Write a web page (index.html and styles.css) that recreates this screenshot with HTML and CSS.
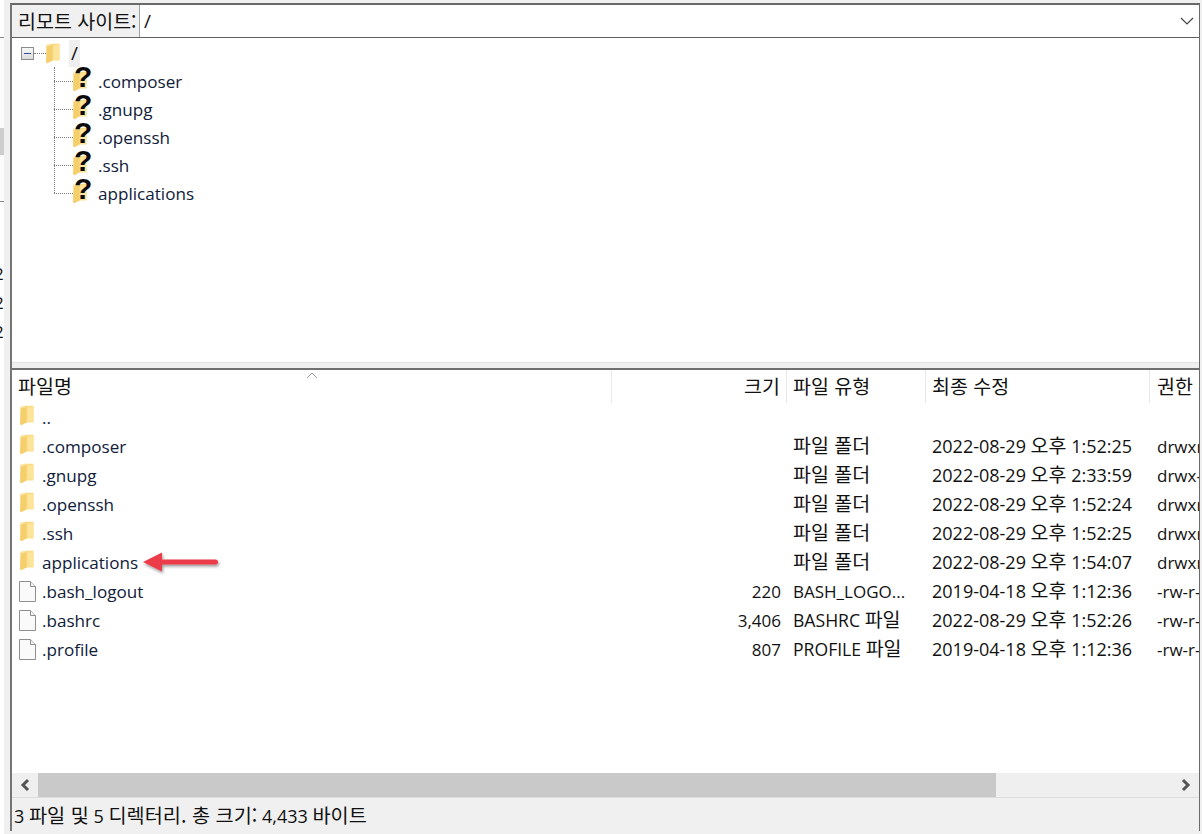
FILE: index.html
```html
<!DOCTYPE html>
<html lang="ko">
<head>
<meta charset="utf-8">
<title>리모트 사이트</title>
<link rel="stylesheet" href="styles.css">
</head>
<body>
<svg class="defs" width="0" height="0" aria-hidden="true">
  <symbol id="folder" viewBox="0 0 15 21">
    <path d="M5 0H14.5V18H5Z" fill="#fbdc86"/>
    <path d="M0 1.5 7 0V18L1.5 21 0 20Z" fill="#f6cf6d"/>
    <path d="M0 1.5 6.5 0.2V1.5L1 3V20Z" fill="#fbe6a8"/>
    <path d="M8 2H14.5V17H8Z" fill="#fde49b"/>
  </symbol>
  <symbol id="file" viewBox="0 0 17 21">
    <path d="M.5.5H11.5L16.5 5.5V20.5H.5Z" fill="#fafafa" stroke="#8f8f8f"/>
    <path d="M11.5.5V5.5H16.5" fill="#f2f2f2" stroke="#8f8f8f"/>
  </symbol>
</svg>
<div class="app">
  <aside class="strip">
    <div class="strip-top"></div>
    <div class="strip-mid"><div class="strip-thumb"></div></div>
    <div class="strip-low"><span>2</span><span>2</span><span>2</span></div>
  </aside>
  <main class="main">
    <div class="topbar">
      <div class="site-label ko">리모트 사이트:</div>
      <div class="site-input"><span class="path">/</span>
        <svg class="chevron" width="14" height="8" viewBox="0 0 14 8"><path d="M1 1 7 7 13 1" fill="none" stroke="#444" stroke-width="1.2"/></svg>
      </div>
    </div>
    <section class="tree">
      <div class="tree-root">
        <span class="expander"></span>
        <span class="hdots"></span>
        <svg class="icon-folder"><use href="#folder"/></svg>
        <span class="root-name">/</span>
      </div>
      <ul class="tree-children">
        <li><span class="qicon"><svg class="icon-folder"><use href="#folder"/></svg><b>?</b></span>.composer</li>
        <li><span class="qicon"><svg class="icon-folder"><use href="#folder"/></svg><b>?</b></span>.gnupg</li>
        <li><span class="qicon"><svg class="icon-folder"><use href="#folder"/></svg><b>?</b></span>.openssh</li>
        <li><span class="qicon"><svg class="icon-folder"><use href="#folder"/></svg><b>?</b></span>.ssh</li>
        <li><span class="qicon"><svg class="icon-folder"><use href="#folder"/></svg><b>?</b></span>applications</li>
      </ul>
    </section>
    <div class="splitter"></div>
    <section class="list">
      <div class="row head">
        <div class="c-name ko">파일명<svg class="sort" width="12" height="7" viewBox="0 0 12 7"><path d="M1 6 6 1 11 6" fill="none" stroke="#9a9a9a"/></svg></div>
        <div class="c-size ko">크기</div>
        <div class="c-type ko">파일 유형</div>
        <div class="c-date ko">최종 수정</div>
        <div class="c-perm ko">권한</div>
      </div>
      <div class="row"><div class="c-name"><svg class="icon-folder"><use href="#folder"/></svg>..</div></div>
      <div class="row"><div class="c-name"><svg class="icon-folder"><use href="#folder"/></svg>.composer</div><div class="c-size"></div><div class="c-type ko">파일 폴더</div><div class="c-date">2022-08-29 <span class="ko">오후</span> 1:52:25</div><div class="c-perm">drwxr-xr-x</div></div>
      <div class="row"><div class="c-name"><svg class="icon-folder"><use href="#folder"/></svg>.gnupg</div><div class="c-size"></div><div class="c-type ko">파일 폴더</div><div class="c-date">2022-08-29 <span class="ko">오후</span> 2:33:59</div><div class="c-perm">drwx------</div></div>
      <div class="row"><div class="c-name"><svg class="icon-folder"><use href="#folder"/></svg>.openssh</div><div class="c-size"></div><div class="c-type ko">파일 폴더</div><div class="c-date">2022-08-29 <span class="ko">오후</span> 1:52:24</div><div class="c-perm">drwxr-xr-x</div></div>
      <div class="row"><div class="c-name"><svg class="icon-folder"><use href="#folder"/></svg>.ssh</div><div class="c-size"></div><div class="c-type ko">파일 폴더</div><div class="c-date">2022-08-29 <span class="ko">오후</span> 1:52:25</div><div class="c-perm">drwxr-xr-x</div></div>
      <div class="row"><div class="c-name"><svg class="icon-folder"><use href="#folder"/></svg>applications
        <svg class="arrow" width="84" height="28" viewBox="0 0 84 28"><defs><filter id="shadow" x="-10%" y="-30%" width="125%" height="180%"><feDropShadow dx="1" dy="2" stdDeviation="1.5" flood-color="#000" flood-opacity=".4"/></filter></defs><path d="M0 11 19 1.5V8.5H72.5a2.5 2.5 0 0 1 0 5H19V20.5Z" fill="#ec3a48" filter="url(#shadow)"/></svg>
      </div><div class="c-size"></div><div class="c-type ko">파일 폴더</div><div class="c-date">2022-08-29 <span class="ko">오후</span> 1:54:07</div><div class="c-perm">drwxr-xr-x</div></div>
      <div class="row"><div class="c-name"><svg class="icon-file"><use href="#file"/></svg>.bash_logout</div><div class="c-size">220</div><div class="c-type">BASH_LOGO...</div><div class="c-date">2019-04-18 <span class="ko">오후</span> 1:12:36</div><div class="c-perm">-rw-r--r--</div></div>
      <div class="row"><div class="c-name"><svg class="icon-file"><use href="#file"/></svg>.bashrc</div><div class="c-size">3,406</div><div class="c-type wide">BASHRC <span class="ko">파일</span></div><div class="c-date">2022-08-29 <span class="ko">오후</span> 1:52:26</div><div class="c-perm">-rw-r--r--</div></div>
      <div class="row"><div class="c-name"><svg class="icon-file"><use href="#file"/></svg>.profile</div><div class="c-size">807</div><div class="c-type wide">PROFILE <span class="ko">파일</span></div><div class="c-date">2019-04-18 <span class="ko">오후</span> 1:12:36</div><div class="c-perm">-rw-r--r--</div></div>
    </section>
    <div class="hscroll">
      <button class="sb-btn" type="button"><svg width="12" height="14" viewBox="0 0 12 14"><path d="M9 2 4 7 9 12" fill="none" stroke="#555" stroke-width="3"/></svg></button>
      <div class="sb-track"><div class="sb-thumb"></div></div>
      <button class="sb-btn" type="button"><svg width="12" height="14" viewBox="0 0 12 14"><path d="M3 2 8 7 3 12" fill="none" stroke="#555" stroke-width="3"/></svg></button>
    </div>
    <footer class="status">3 <span class="ko">파일 및</span> 5 <span class="ko">디렉터리. 총 크기:</span> 4,433 <span class="ko">바이트</span></footer>
  </main>
</div>
</body>
</html>
```
FILE: styles.css
```css
* { box-sizing: border-box; }
html, body { margin: 0; padding: 0; }
body {
  width: 1202px;
  height: 834px;
  overflow: hidden;
  background: #f0f0f0;
  color: #111;
  font-family: "Open Sans", "Noto Sans CJK KR", sans-serif;
  font-size: 17px;
}
.ko { font-family: "Noto Sans CJK KR", sans-serif; font-size: 19.5px; }
span.ko { line-height: 1; }
.defs { position: absolute; }
.app { display: flex; height: 834px; }

.strip { width: 10px; display: flex; flex-direction: column; background: #f0f0f0; flex: none; }
.strip-top { height: 38px; width: 4px; background: #fff; border-bottom: 1px solid #8a8a8a; }
.strip-mid { height: 164px; width: 4px; padding-top: 90px; background: #fbfbfb; border-bottom: 1px solid #8a8a8a; }
.strip-thumb { height: 27px; background: #cdcdcd; }
.strip-low {
  flex: 1;
  width: 4px;
  background: #fff;
  overflow: hidden;
  padding-top: 60px;
  display: flex;
  flex-direction: column;
  gap: 5px;
}
.strip-low span { margin-left: -6px; height: 24px; line-height: 24px; font-size: 17px; }

.main {
  width: 1190px;
  display: flex;
  flex-direction: column;
  margin-top: 3px;
  margin-bottom: 3px;
  border-top: 2px solid #696969;
  border-left: 2px solid #757575;
  border-right: 1px solid #6a6a6a;
  flex: none;
  height: 828px;
}

.topbar { height: 33px; display: flex; border-bottom: 1px solid #606060; flex: none; }
.site-label {
  width: 128px;
  padding-left: 6px;
  background: #f0f0f0;
  line-height: 31px;
  white-space: nowrap;
  border-right: 1px solid #a0a0a0;
}
.site-input {
  flex: 1;
  background: #fff;
  padding-left: 4px;
  line-height: 32px;
  display: flex;
  align-items: center;
  justify-content: space-between;
  padding-right: 5px;
}
.path { font-size: 19px; }
.chevron { flex: none; }

.tree { height: 324px; background: #fff; flex: none; padding-left: 9px; padding-top: 1px; }
.tree-root { height: 28px; display: flex; align-items: center; }
.expander {
  width: 13px;
  height: 13px;
  border: 1px solid #8d8d8d;
  background: linear-gradient(#f8f8f8, #dcdcdc);
  position: relative;
  flex: none;
}
.expander::after {
  content: "";
  position: absolute;
  left: 2px;
  right: 2px;
  top: 5px;
  height: 1px;
  background: #2b4f9c;
}
.hdots { width: 12px; border-top: 1px dotted #777; flex: none; }
.icon-folder { width: 14px; height: 21px; flex: none; }
.root-name { margin-left: 9px; width: 11px; height: 27px; line-height: 27px; background: #efefef; text-align: center; font-size: 19px; }
.tree-children {
  list-style: none;
  margin: 0 0 0 33px;
  padding: 0;
  width: 300px;
  position: relative;
}
.tree-children::before {
  content: "";
  position: absolute;
  left: 0;
  top: 0;
  height: 126px;
  border-left: 1px dotted #777;
}
.tree-children li { height: 28px; display: flex; align-items: center; white-space: nowrap; color: #10203a; font-size: 17.1px; }
.tree-children li::before {
  content: "";
  width: 19px;
  border-top: 1px dotted #777;
  flex: none;
}
.qicon { position: relative; width: 25px; height: 24px; flex: none; display: block; }
.qicon .icon-folder { display: block; margin-top: 2px; }
.qicon b {
  position: absolute;
  left: 1px;
  top: -2px;
  width: 15px;
  height: 24px;
  text-align: center;
  font: bold 30px/20px "Liberation Sans", sans-serif;
  color: #0b0b0b;
}

.splitter { height: 6px; background: #f0f0f0; flex: none; border-top: 1px solid #e2e2e2; }

.list {
  height: 405px;
  flex: none;
  background: #fff;
  border-top: 2px solid #6f6f6f;
  overflow: hidden;
}
.row {
  display: grid;
  grid-template-columns: 600px 175px 139px 224px 60px;
  height: 29px;
  line-height: 29px;
  white-space: nowrap;
}
.row.head { height: 33px; line-height: 31px; }
.row > .c-type.ko { line-height: 26px; }
.head > div { border-right: 1px solid #e8e8e8; }
.head > div:last-child { border-right: 0; }
.c-name { position: relative; padding-left: 7px; display: flex; align-items: center; color: #10203a; font-size: 17.1px; }
.head .c-name { display: block; color: #111; padding-left: 6px; font-size: 19.5px; }
.c-name .icon-folder { margin-left: 1px; margin-right: 8px; margin-top: -5px; }
.icon-file { width: 17px; height: 21px; margin-right: 6px; flex: none; margin-top: -1px; }
.c-size { text-align: right; padding-right: 6px; }
.c-type { padding-left: 6px; }
.c-type.wide { font-size: 17.6px; }
.c-date { padding-left: 6px; font-size: 18px; }
.head .c-date.ko, .head .c-type.ko { font-size: 19.5px; line-height: 31px; }
.c-perm { padding-left: 7px; }
.sort { position: absolute; left: 294px; top: 2px; }
.arrow { position: absolute; left: 131px; top: 3px; }

.hscroll { height: 25px; display: flex; background: #efefef; flex: none; align-items: stretch; border-bottom: 1px solid #dcdcdc; }
.sb-btn { width: 26px; border: 0; padding: 0; background: #efefef; display: flex; align-items: center; justify-content: center; flex: none; }
.sb-track { flex: 1; }
.sb-thumb { width: 958px; height: 100%; background: #c9c9c9; }
.status {
  flex: 1;
  background: #f0f0f0;
  padding-left: 2px;
  line-height: 36px;
  white-space: nowrap;
  font-size: 18px;
  color: #111;
}
.status .ko { font-size: 19.7px; }
```
